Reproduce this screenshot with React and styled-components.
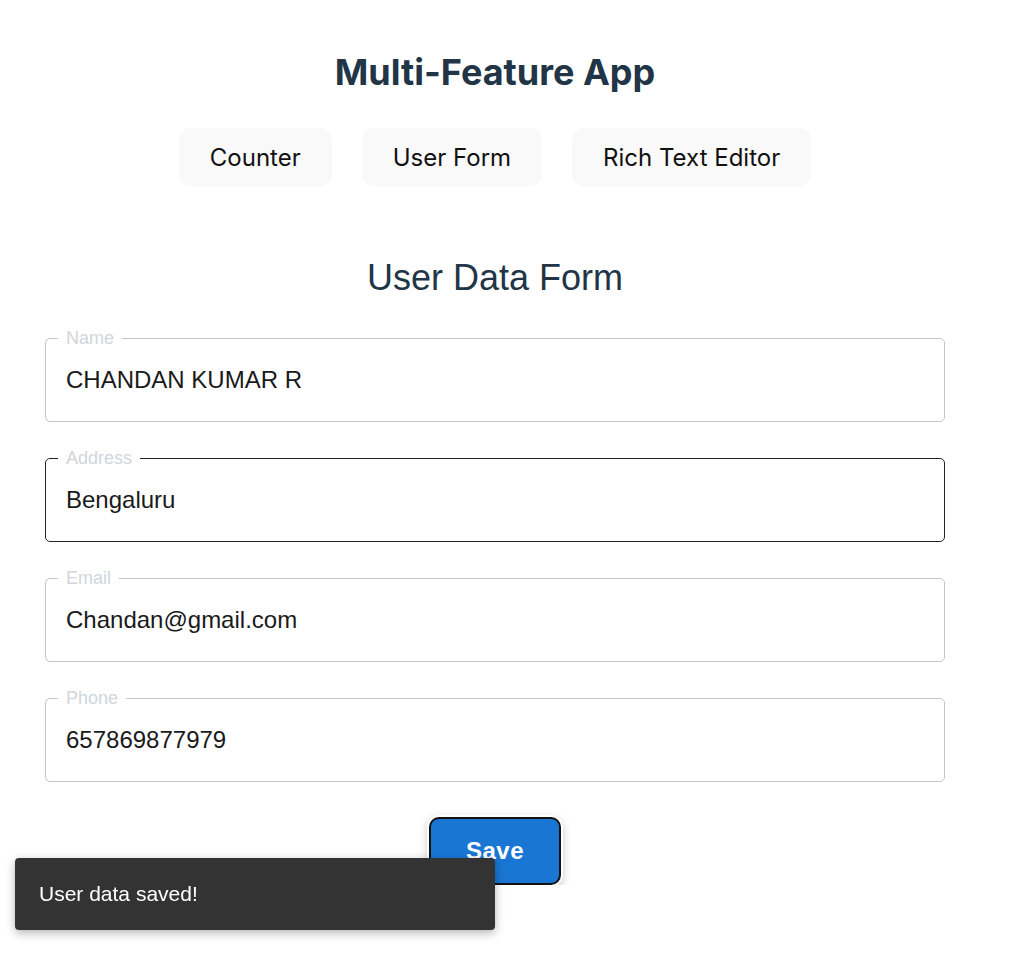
import React, { useState } from 'react';
import styled, { createGlobalStyle } from 'styled-components';

const GlobalStyle = createGlobalStyle`
	html, body {
		margin: 0;
		padding: 0;
		background: #ffffff;
	}
	body {
		font-family: Inter, "Liberation Sans", Arial, sans-serif;
	}
`;

const Page = styled.div`
	width: 900px;
	margin-left: 45px;
	padding-top: 50px;
	display: flex;
	flex-direction: column;
	align-items: center;
`;

const Title = styled.h1`
	margin: 0;
	font-family: Inter, sans-serif;
	font-weight: 700;
	font-size: 36px;
	line-height: 44px;
	color: #213547;
`;

const Nav = styled.nav`
	display: flex;
	gap: 30px;
	margin-top: 34px;
`;

const Tab = styled.button`
	font-family: Inter, sans-serif;
	font-size: 24px;
	font-weight: 400;
	line-height: 28px;
	padding: 15px 30px 13px;
	border: 1px solid transparent;
	border-radius: 12px;
	background: #f9f9f9;
	color: #111111;
	cursor: pointer;
`;

const Heading = styled.h2`
	margin: 71px 0 0;
	font-family: "Liberation Sans", Arial, sans-serif;
	font-weight: 400;
	font-size: 36px;
	line-height: 42px;
	color: #213547;
`;

const Form = styled.form`
	align-self: stretch;
	margin-top: 30px;
	display: flex;
	flex-direction: column;
	gap: 27px;
`;

const Field = styled.fieldset`
	margin: 0;
	padding: 0 12px 13px;
	border: 1px solid ${p => (p.$active ? '#222222' : '#c4c4c4')};
	border-radius: 5px;
	min-width: 0;
`;

const Legend = styled.legend`
	padding: 0 8px;
	font-family: "Liberation Sans", Arial, sans-serif;
	font-size: 18px;
	line-height: 18px;
	color: #d1d5db;
`;

const Input = styled.input`
	display: block;
	box-sizing: border-box;
	width: 100%;
	height: 56px;
	margin-top: 5px;
	padding: 0 8px;
	border: none;
	outline: none;
	background: transparent;
	font-family: "Liberation Sans", Arial, sans-serif;
	font-size: 24px;
	color: #1a1a1a;
`;

const SaveButton = styled.button`
	align-self: center;
	margin-top: 8px;
	width: 132px;
	height: 68px;
	border: 2px solid #111111;
	border-radius: 10px;
	background: #1976d2;
	color: #ffffff;
	font-family: "Liberation Sans", Arial, sans-serif;
	font-weight: 700;
	font-size: 24px;
	letter-spacing: 0.5px;
	box-shadow: 0 0 0 2px #ffffff, 0 3px 8px 2px rgba(0, 0, 0, 0.22);
	cursor: pointer;
`;

// snackbar overlays the page, so it's fixed to the viewport corner
const Toast = styled.div`
	position: fixed;
	left: 15px;
	bottom: 28px;
	width: 480px;
	height: 72px;
	box-sizing: border-box;
	padding: 0 24px;
	display: flex;
	align-items: center;
	background: #333333;
	border-radius: 4px;
	box-shadow: 0 3px 10px rgba(0, 0, 0, 0.3);
	color: #ffffff;
	font-family: "Liberation Sans", Arial, sans-serif;
	font-size: 21px;
`;

const fields = [
	{ name: 'name', label: 'Name', value: 'CHANDAN KUMAR R' },
	{ name: 'address', label: 'Address', value: 'Bengaluru', active: true },
	{ name: 'email', label: 'Email', value: 'Chandan@gmail.com' },
	{ name: 'phone', label: 'Phone', value: '657869877979' },
];

export default function App() {
	const [data, setData] = useState(
		Object.fromEntries(fields.map(f => [f.name, f.value]))
	);

	const onChange = e => setData({ ...data, [e.target.name]: e.target.value });

	return (
		<>
			<GlobalStyle />
			<Page>
				<Title>Multi-Feature App</Title>
				<Nav>
					<Tab>Counter</Tab>
					<Tab>User Form</Tab>
					<Tab>Rich Text Editor</Tab>
				</Nav>
				<Heading>User Data Form</Heading>
				<Form onSubmit={e => e.preventDefault()}>
					{fields.map(f => (
						<Field key={f.name} $active={f.active}>
							<Legend>{f.label}</Legend>
							<Input name={f.name} value={data[f.name]} onChange={onChange} />
						</Field>
					))}
					<SaveButton type="submit">Save</SaveButton>
				</Form>
			</Page>
			<Toast>User data saved!</Toast>
		</>
	);
}
